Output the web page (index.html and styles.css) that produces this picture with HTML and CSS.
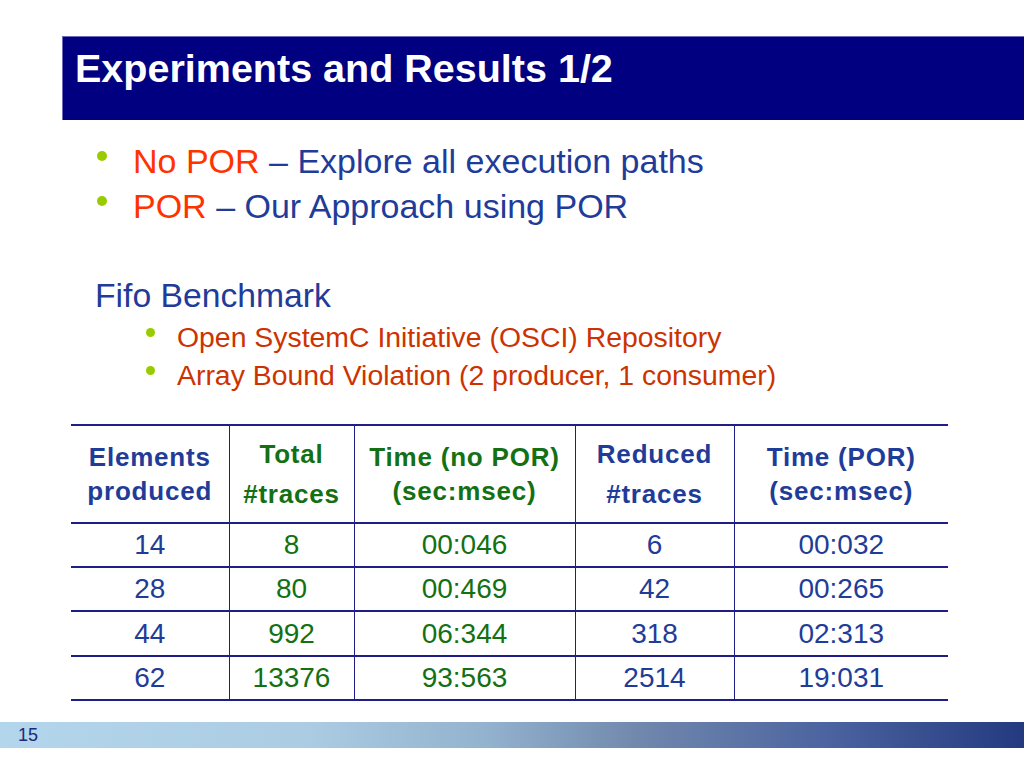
FILE: index.html
```html
<!DOCTYPE html>
<html>
<head>
<meta charset="utf-8">
<title>Experiments and Results 1/2</title>
<link rel="stylesheet" href="styles.css">
</head>
<body>
<div class="slide">
  <header class="title-bar">
    <h1 class="title">Experiments and Results 1/2</h1>
  </header>

  <ul class="main-list">
    <li><span class="dot"></span><span class="txt"><span class="hl">No POR</span> – Explore all execution paths</span></li>
    <li><span class="dot"></span><span class="txt"><span class="hl">POR</span> – Our Approach using POR</span></li>
  </ul>

  <p class="section">Fifo Benchmark</p>
  <ul class="sub-list">
    <li><span class="dot small"></span><span class="txt">Open SystemC Initiative (OSCI) Repository</span></li>
    <li><span class="dot small"></span><span class="txt">Array Bound Violation (2 producer, 1 consumer)</span></li>
  </ul>

  <table class="results">
    <colgroup>
      <col class="c1"><col class="c2"><col class="c3"><col class="c4"><col class="c5">
    </colgroup>
    <thead>
      <tr>
        <th class="blue tight"><div>Elements</div><div>produced</div></th>
        <th class="green loose"><div>Total</div><div>#traces</div></th>
        <th class="green tight"><div>Time (no POR)</div><div>(sec:msec)</div></th>
        <th class="blue loose"><div>Reduced</div><div>#traces</div></th>
        <th class="blue tight"><div>Time (POR)</div><div>(sec:msec)</div></th>
      </tr>
    </thead>
    <tbody>
      <tr><td class="blue">14</td><td class="green">8</td><td class="green">00:046</td><td class="blue">6</td><td class="blue">00:032</td></tr>
      <tr><td class="blue">28</td><td class="green">80</td><td class="green">00:469</td><td class="blue">42</td><td class="blue">00:265</td></tr>
      <tr><td class="blue">44</td><td class="green">992</td><td class="green">06:344</td><td class="blue">318</td><td class="blue">02:313</td></tr>
      <tr><td class="blue">62</td><td class="green">13376</td><td class="green">93:563</td><td class="blue">2514</td><td class="blue">19:031</td></tr>
    </tbody>
  </table>

  <footer class="footer-band">
    <span class="page-num">15</span>
  </footer>
</div>
</body>
</html>
```

FILE: styles.css
```css
html, body {
  margin: 0;
  padding: 0;
  background: #ffffff;
}

.slide {
  width: 1024px;
  height: 768px;
  display: flex;
  flex-direction: column;
  font-family: "Liberation Sans", Arial, sans-serif;
  overflow: hidden;
}

.title-bar {
  margin-top: 36px;
  margin-left: 62px;
  height: 84px;
  box-sizing: border-box;
  background: #000080;
  border-top: 1px solid #6a6ab8;
  border-left: 1px solid #6a6ab8;
  padding: 8px 0 0 12px;
}

.title {
  margin: 0;
  color: #ffffff;
  font-size: 39.5px;
  line-height: 46px;
  font-weight: bold;
}

.main-list,
.sub-list {
  list-style: none;
  margin: 0;
  padding: 0;
}

.main-list {
  margin-top: 19px;
  font-size: 34px;
  line-height: 45px;
  color: #1f3c98;
}

.main-list li {
  display: flex;
  align-items: flex-start;
  padding-left: 97px;
}

.main-list .dot {
  width: 10px;
  height: 10px;
  margin-top: 12px;
  margin-right: 26px;
}

.hl {
  color: #ff3300;
}

.dot {
  flex: none;
  border-radius: 50%;
  background: #99cc00;
}

.section {
  margin: 46px 0 0 95px;
  font-size: 33.7px;
  line-height: 40px;
  color: #1f3c98;
}

.sub-list {
  margin-top: 3px;
  font-size: 28.4px;
  line-height: 38px;
  color: #cc3300;
}

.sub-list li {
  display: flex;
  align-items: flex-start;
  padding-left: 146px;
}

.sub-list .dot {
  width: 9px;
  height: 9px;
  margin-top: 10px;
  margin-right: 22px;
}

.results {
  margin-top: 30px;
  margin-left: 71px;
  width: 877px;
  border-collapse: collapse;
  table-layout: fixed;
}

.c1 { width: 158px; }
.c2 { width: 125px; }
.c3 { width: 221px; }
.c4 { width: 159px; }
.c5 { width: 214px; }

.results th,
.results td {
  padding: 0;
  text-align: center;
  vertical-align: middle;
  border-top: 2px solid #1e1e86;
  border-bottom: 2px solid #1e1e86;
  border-left: 1px solid #1e1e86;
  border-right: 1px solid #1e1e86;
}

.results th:first-child,
.results td:first-child {
  border-left: none;
}

.results th:last-child,
.results td:last-child {
  border-right: none;
}

.results th {
  height: 96px;
  font-size: 26px;
  font-weight: bold;
  letter-spacing: 0.8px;
}

.results th.tight { line-height: 34px; }
.results th.loose { line-height: 40px; }

.results td {
  height: 42px;
  font-size: 28px;
  line-height: 32px;
}

.results tbody tr:nth-child(3) td {
  height: 43px;
}

.blue { color: #1f3c98; }
.green { color: #137013; }

.footer-band {
  margin-top: auto;
  margin-bottom: 20px;
  height: 26px;
  display: flex;
  align-items: center;
  padding-left: 18px;
  background: linear-gradient(to right, #b4d6ec 0%, #abcce3 30%, #92b1cd 48%, #7189ad 62%, #4d65a0 80%, #233a80 100%);
}

.page-num {
  font-size: 18px;
  color: #1a2a78;
  line-height: 20px;
}
```
